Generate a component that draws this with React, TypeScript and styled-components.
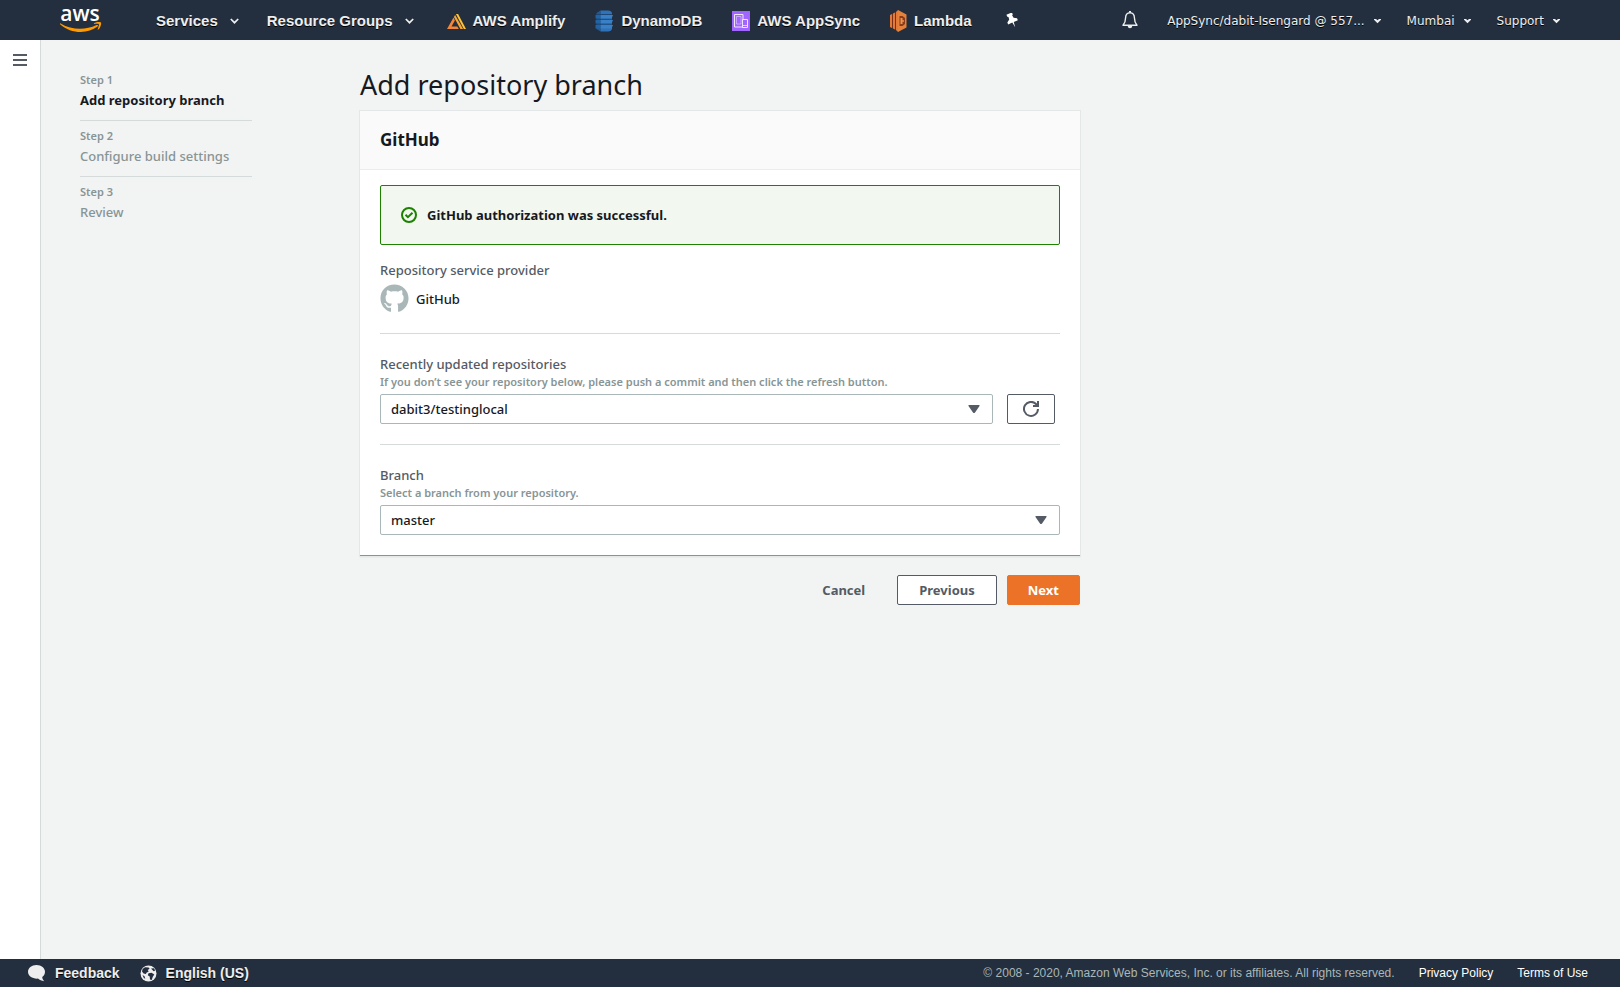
import React from "react";
import styled, { createGlobalStyle, css } from "styled-components";
import { FaGithub } from "react-icons/fa";

const sans = '"Noto Sans", "Open Sans", sans-serif';
const helvetica = '"Liberation Sans", Arial, sans-serif';
const verdana = '"DejaVu Sans", Verdana, sans-serif';

const GlobalStyle = createGlobalStyle`
  *, *::before, *::after { box-sizing: border-box; }
  body { margin: 0; background: #f2f3f3; color: #16191f; font-family: ${sans}; font-size: 13px; }
  button, select { font-family: inherit; margin: 0; }
  a { color: inherit; text-decoration: none; }
  h1, h2, p, ol { margin: 0; padding: 0; }
  svg { display: block; flex: none; }
`;

const Page = styled.div`
  display: flex;
  flex-direction: column;
  min-height: 100vh;
`;

/* Top bar */
const TopBar = styled.header`
  display: flex;
  align-items: center;
  justify-content: space-between;
  height: 40px;
  padding: 0 60px;
  background: #232f3e;
  color: #eee;
`;

const NavGroup = styled.nav<{ $gap: number }>`
  display: flex;
  align-items: center;
  gap: ${(p) => p.$gap}px;
  height: 40px;
`;

const LogoLink = styled.a`
  margin-right: 26px;
`;

const MenuButton = styled.button<{ $small?: boolean }>`
  display: flex;
  align-items: center;
  gap: ${(p) => (p.$small ? 9 : 12)}px;
  padding: 2px 0 0;
  border: 0;
  background: none;
  color: #eee;
  line-height: 20px;
  white-space: nowrap;
  text-shadow: 0 1px 0 #000;
  cursor: pointer;
  ${(p) =>
    p.$small
      ? css`
          font-family: ${verdana};
          font-size: 12px;
        `
      : css`
          font-family: ${helvetica};
          font-size: 15px;
          font-weight: 700;
        `}
`;

const Shortcuts = styled.div`
  display: flex;
  align-items: center;
  gap: 30px;
  margin-left: 5px;
`;

const Shortcut = styled.a`
  display: flex;
  align-items: center;
  gap: 7px;
  padding-top: 2px;
  font: 700 15px/20px ${helvetica};
  white-space: nowrap;
  text-shadow: 0 1px 0 #000;
`;

const IconButton = styled.button`
  padding: 0;
  border: 0;
  background: none;
  color: #eee;
  cursor: pointer;
`;

const SpacedIconButton = styled(IconButton)`
  margin: 0 3px;
`;

/* Body */
const Body = styled.div`
  display: flex;
  flex: 1;
`;

const Rail = styled.aside`
  display: flex;
  align-items: flex-start;
  flex: none;
  width: 41px;
  padding: 14px 0 0 13px;
  background: #fff;
  border-right: 1px solid #d5dbdb;
`;

const Main = styled.main`
  display: flex;
  flex: 1;
  gap: 108px;
  padding: 25px 40px 40px 39px;
`;

const Steps = styled.ol`
  flex: none;
  width: 172px;
  padding-top: 5px;
  list-style: none;
`;

const Step = styled.li<{ $active?: boolean }>`
  padding-bottom: 10px;
  color: ${(p) => (p.$active ? "#16191f" : "#879596")};
  font-weight: ${(p) => (p.$active ? 700 : 500)};
  line-height: 20px;
  white-space: nowrap;

  & + & {
    padding-top: 5px;
    border-top: 1px solid #d5dbdb;
  }
`;

const StepNumber = styled.div`
  color: #879596;
  font-size: 11px;
  font-weight: 600;
`;

const Content = styled.div`
  flex: 1;
  max-width: 720px;
`;

const Title = styled.h1`
  margin-bottom: 6px;
  font-size: 27px;
  font-weight: 400;
  line-height: 40px;
`;

const Card = styled.section`
  background: #fff;
  border-bottom: 1px solid #879596;
  box-shadow: 0 0 0 1px #e3e7e7, 0 1px 1px #c4caca;
`;

const CardHeader = styled.div`
  padding: 15px 20px;
  background: #fafafa;
  border-bottom: 1px solid #eaeded;
`;

const CardTitle = styled.h2`
  font-size: 17px;
  font-weight: 700;
  line-height: 28px;
`;

const CardBody = styled.div`
  padding: 15px 20px 20px;
`;

const Alert = styled.div`
  display: flex;
  align-items: center;
  gap: 10px;
  height: 60px;
  margin-bottom: 15px;
  padding: 0 20px;
  border: 1px solid #1d8102;
  border-radius: 2px;
  background: #f2f8f0;
  font-weight: 700;
`;

const Field = styled.div<{ $divided?: boolean }>`
  ${(p) =>
    p.$divided &&
    css`
      margin-top: 20px;
      padding-top: 20px;
      border-top: 1px solid #d5dbdb;
    `}
`;

const Label = styled.label`
  display: block;
  color: #545b64;
  font-weight: 500;
  line-height: 20px;
`;

const Hint = styled.p`
  color: #879596;
  font-size: 11px;
  font-weight: 600;
  line-height: 16px;
`;

const Control = styled.div`
  display: flex;
  align-items: center;
  gap: 14px;
  margin-top: 4px;
`;

const Provider = styled(Control)`
  gap: 7px;
  color: #16191f;
  font-weight: 500;
  line-height: 20px;

  svg { color: #aab7b8; }
`;

const SelectBox = styled.div`
  display: grid;
  flex: 1;
  align-items: center;

  > * { grid-area: 1 / 1; }
  > svg {
    justify-self: end;
    margin-right: 13px;
    pointer-events: none;
  }
`;

const Select = styled.select`
  width: 100%;
  height: 30px;
  padding: 0 40px 0 10px;
  appearance: none;
  border: 1px solid #aab7b8;
  border-radius: 2px;
  background: #fff;
  color: #16191f;
  font-size: 13px;
  font-weight: 500;
`;

const Button = styled.button<{ $kind?: "primary" | "plain" }>`
  display: flex;
  align-items: center;
  justify-content: center;
  height: 30px;
  padding: 0 21px;
  border: 1px solid #545b64;
  border-radius: 2px;
  background: #fff;
  color: #545b64;
  font-size: 13px;
  font-weight: 700;
  cursor: pointer;
  ${(p) => p.$kind === "plain" && css`border-color: transparent; background: none;`}
  ${(p) => p.$kind === "primary" && css`padding: 0 20px; border-color: #eb7226; background: #eb7226; color: #fff;`}
`;

const RefreshButton = styled(Button)`
  width: 48px;
  margin-right: 5px;
  padding: 0;
`;

const Actions = styled.div`
  display: flex;
  justify-content: flex-end;
  gap: 10px;
  margin-top: 19px;
`;

/* Footer */
const Footer = styled.footer`
  display: flex;
  align-items: center;
  justify-content: space-between;
  height: 28px;
  padding: 0 32px 0 28px;
  background: #232f3e;
  font: 12px/20px ${helvetica};
  white-space: nowrap;
`;

const FooterGroup = styled.div<{ $gap: number }>`
  display: flex;
  align-items: center;
  gap: ${(p) => p.$gap}px;
`;

const FooterButton = styled.button`
  display: flex;
  align-items: center;
  gap: 9px;
  padding: 0;
  border: 0;
  background: none;
  color: #eee;
  font: 700 14px/20px ${helvetica};
  text-shadow: 0 1px 0 #000;
  cursor: pointer;
`;

const Copyright = styled.span`
  color: #aab7b8;
`;

const FooterLink = styled.a`
  color: #fff;
`;

/* Drawings */
const AwsLogo = () => (
  <svg width="42" height="40" viewBox="0 0 42 40">
    <text x="20" y="21" textAnchor="middle" fontFamily="Open Sans, sans-serif" fontSize="21" fontWeight="600" fill="#fff">
      aws
    </text>
    <g transform="translate(0 5)">
      <path d="M.6 18.4c11.500 6.800 24.500 7 36 1.600 1.200-.5 2 .7.900 1.600-9.500 7.400-26.700 7.400-37.200-2.200-.6-.6-.3-1.300.3-1z" fill="#f90" />
      <path d="M34 18.300c2.500-1.800 6.500-1.500 7-.8.500.8-.2 5-2.600 7-.5.400-.9.200-.7-.3.600-1.500 1.600-4.400 1.100-5.100-.5-.6-3.200-.3-4.500-.2-.5 0-.6-.3-.3-.6z" fill="#f90" />
    </g>
  </svg>
);

const Chevron = () => (
  <svg width="9" height="6" viewBox="0 0 9 6" fill="none" stroke="#eee" strokeWidth="1.700">
    <path d="M.8 1l3.700 3.700L8.200 1" />
  </svg>
);

const SmallCaret = () => (
  <svg width="7" height="5" viewBox="0 0 7 5">
    <path d="M0 0h2l1.500 1.200L5 0h2v.8L3.500 4.300 0 .8z" fill="#eee" />
  </svg>
);

const AmplifyIcon = () => (
  <svg width="19" height="15" viewBox="0 0 19 15">
    <path d="M6.500 3.500L0 15h11.800l-1.500-2.600H4.500l3.400-6z" fill="#f58536" />
    <path d="M6.900 3l1.200-2 8 14h-2.700z" fill="#fba634" />
    <path d="M8.900 0h2.200L19 15h-2.200z" fill="#ffc233" />
  </svg>
);

const DynamoIcon = () => (
  <svg width="19" height="22" viewBox="0 0 19 22">
    <path d="M1.500 3L5.500.5v21l-4-2.500z" fill="#205b98" />
    <path d="M5.500.5h7.500c2 0 4 1.300 4 2.700v15.600c0 1.400-2 2.700-4 2.700H5.500z" fill="#2e73b8" />
    <path d="M5.500 5H18l-1.500 3.500h-11zM5.500 10H18l-1.500 3.500h-11zM5.500 15H18l-1.500 3.500h-11z" fill="#3a80c6" />
    <path d="M.5 5h5v3.500h-5zM.5 10h5v3.500h-5zM.5 15h5v3.500h-5z" fill="#2263a4" />
    <path d="M1 4.500h16M1 9.300h16M1 14.200h16" stroke="#1a4370" strokeWidth=".9" />
  </svg>
);

const AppSyncIcon = () => (
  <svg width="18" height="20" viewBox="0 0 18 20" fill="none" stroke="#f0e5ff">
    <path d="M0 0h18v20H0z" fill="#a166ff" stroke="none" />
    <path d="M2.500 3.500h8.500v12.500H2.500z" strokeWidth="1" />
    <path d="M4.500 5.500h4.500v7.500H4.500z" strokeWidth=".5" />
    <path d="M10.500 8.500h5v8h-5z" fill="#a166ff" strokeWidth="1" />
    <path d="M10.500 14.500h5" strokeWidth=".8" />
  </svg>
);

const LambdaIcon = () => (
  <svg width="17" height="22" viewBox="0 0 17 22">
    <path d="M0 5l2-1v14l-2-1zM3 3.500l2-1v17l-2-1zM6 2l2-2v22l-2-2z" fill="#e07a3a" />
    <path d="M2 4l1-.5v15L2 18zM5 2.500L6 2v18l-1-.5z" fill="#7a3015" />
    <path d="M8 0l8.500 4.500v13L8 22z" fill="#e5813a" />
    <path d="M9.500 6h3l2.500 2v6l-2.500 2h-3z" fill="#8b3a1a" />
    <path d="M10.500 8h2v2.200h1.500v1.600h-1.500V14h-2z" fill="#f0944d" />
  </svg>
);

const PinIcon = () => (
  <svg width="14" height="15" viewBox="0 0 14 15" fill="#fff">
    <g transform="rotate(-24 7 7)">
      <path d="M4 0h6v2.200l-1 .6.4 2.700 2.900 2v2H7.800L7 14.800l-.8-5.300H1.700v-2l2.900-2L5 2.800l-1-.6z" />
    </g>
  </svg>
);

const BellIcon = () => (
  <svg width="16" height="18" viewBox="0 0 16 18" fill="none" stroke="#eee" strokeWidth="1.400">
    <path d="M8 1.800c-3 0-4.400 2.200-4.400 5 0 4-1 5.600-2.600 7.400h14c-1.600-1.800-2.600-3.400-2.600-7.400 0-2.800-1.400-5-4.400-5z" strokeLinejoin="round" />
    <path d="M7 .8h2" />
    <path d="M5.800 15h4.400c0 3-4.400 3-4.400 0z" fill="#eee" stroke="none" />
  </svg>
);

const MenuIcon = () => (
  <svg width="14" height="12" viewBox="0 0 14 12" fill="#545b64">
    <path d="M0 0h14v2H0zM0 5h14v2H0zM0 10h14v2H0z" />
  </svg>
);

const SuccessIcon = () => (
  <svg width="16" height="16" viewBox="0 0 16 16" fill="none" stroke="#1d8102" strokeWidth="2">
    <circle cx="8" cy="8" r="7" />
    <path d="M4.500 7.800l2.400 2.300 4.600-4.400" />
  </svg>
);

const SelectArrow = () => (
  <svg width="12" height="8" viewBox="0 0 12 8">
    <path d="M1 0h10q1 0 .5 1L7 7.500q-1 1-2 0L.5 1Q0 0 1 0z" fill="#545b64" />
  </svg>
);

const RefreshIcon = () => (
  <svg width="16" height="16" viewBox="0 0 16 16" fill="none" stroke="#545b64" strokeWidth="2">
    <path d="M15 8a7 7 0 1 1-2-5l2 2" />
    <path d="M15 0v5h-5" />
  </svg>
);

const BubbleIcon = () => (
  <svg width="18" height="17" viewBox="0 0 18 17" fill="#eee">
    <path d="M8.500 0C13.500 0 17 3 17 6.800c0 2.200-1 4-2.800 5.200.2 1.600.8 3 2 4.200-2.600-.2-4.700-1.200-6.200-2.600C4.500 14 0 11 0 6.800 0 3 3.500 0 8.500 0z" />
  </svg>
);

const GlobeIcon = () => (
  <svg width="17" height="17" viewBox="0 0 17 17">
    <circle cx="8.500" cy="8.500" r="8" fill="#eee" />
    <path d="M2.600 4L5 2.300l3.600.2 1 1.300-1.900 1.300 1 1.300-2.200 1.300-.6 1.400-2.300-.6L2 6.500zM11 3.500l2.800-.3 1.500 2.300-1.700.7zM8.500 8.300l3-.6 2.800 1.800-1.500 2.200-1.100 3.200-1.700-.4-.3-3-1.900-1.300zM2.500 10l2 1.200.8 2.600-1.500-.8z" fill="#232f3e" />
  </svg>
);

const steps = ["Add repository branch", "Configure build settings", "Review"];

const shortcuts = [
  { name: "AWS Amplify", icon: <AmplifyIcon /> },
  { name: "DynamoDB", icon: <DynamoIcon /> },
  { name: "AWS AppSync", icon: <AppSyncIcon /> },
  { name: "Lambda", icon: <LambdaIcon /> },
];

export default function App() {
  return (
    <Page>
      <GlobalStyle />
      <TopBar>
        <NavGroup $gap={28}>
          <LogoLink href="#">
            <AwsLogo />
          </LogoLink>
          <MenuButton>
            Services <Chevron />
          </MenuButton>
          <MenuButton>
            Resource Groups <Chevron />
          </MenuButton>
          <Shortcuts>
            {shortcuts.map((s) => (
              <Shortcut href="#" key={s.name}>
                {s.icon}
                {s.name}
              </Shortcut>
            ))}
            <SpacedIconButton aria-label="Edit shortcuts">
              <PinIcon />
            </SpacedIconButton>
          </Shortcuts>
        </NavGroup>
        <NavGroup $gap={26}>
          <SpacedIconButton aria-label="Notifications">
            <BellIcon />
          </SpacedIconButton>
          <MenuButton $small>
            AppSync/dabit-Isengard @ 557... <SmallCaret />
          </MenuButton>
          <MenuButton $small>
            Mumbai <SmallCaret />
          </MenuButton>
          <MenuButton $small>
            Support <SmallCaret />
          </MenuButton>
        </NavGroup>
      </TopBar>

      <Body>
        <Rail>
          <IconButton aria-label="Open navigation">
            <MenuIcon />
          </IconButton>
        </Rail>
        <Main>
          <Steps>
            {steps.map((name, i) => (
              <Step key={name} $active={i === 0}>
                <StepNumber>Step {i + 1}</StepNumber>
                {name}
              </Step>
            ))}
          </Steps>
          <Content>
            <Title>Add repository branch</Title>
            <Card>
              <CardHeader>
                <CardTitle>GitHub</CardTitle>
              </CardHeader>
              <CardBody>
                <Alert role="status">
                  <SuccessIcon />
                  GitHub authorization was successful.
                </Alert>
                <Field>
                  <Label as="div">Repository service provider</Label>
                  <Provider>
                    <FaGithub size={29} />
                    GitHub
                  </Provider>
                </Field>
                <Field $divided>
                  <Label htmlFor="repository">Recently updated repositories</Label>
                  <Hint>If you don’t see your repository below, please push a commit and then click the refresh button.</Hint>
                  <Control>
                    <SelectBox>
                      <Select id="repository">
                        <option>dabit3/testinglocal</option>
                      </Select>
                      <SelectArrow />
                    </SelectBox>
                    <RefreshButton aria-label="Refresh">
                      <RefreshIcon />
                    </RefreshButton>
                  </Control>
                </Field>
                <Field $divided>
                  <Label htmlFor="branch">Branch</Label>
                  <Hint>Select a branch from your repository.</Hint>
                  <Control>
                    <SelectBox>
                      <Select id="branch">
                        <option>master</option>
                      </Select>
                      <SelectArrow />
                    </SelectBox>
                  </Control>
                </Field>
              </CardBody>
            </Card>
            <Actions>
              <Button $kind="plain">Cancel</Button>
              <Button>Previous</Button>
              <Button $kind="primary">Next</Button>
            </Actions>
          </Content>
        </Main>
      </Body>

      <Footer>
        <FooterGroup $gap={20}>
          <FooterButton>
            <BubbleIcon />
            Feedback
          </FooterButton>
          <FooterButton>
            <GlobeIcon />
            English (US)
          </FooterButton>
        </FooterGroup>
        <FooterGroup $gap={24}>
          <Copyright>© 2008 - 2020, Amazon Web Services, Inc. or its affiliates. All rights reserved.</Copyright>
          <FooterLink href="#">Privacy Policy</FooterLink>
          <FooterLink href="#">Terms of Use</FooterLink>
        </FooterGroup>
      </Footer>
    </Page>
  );
}
